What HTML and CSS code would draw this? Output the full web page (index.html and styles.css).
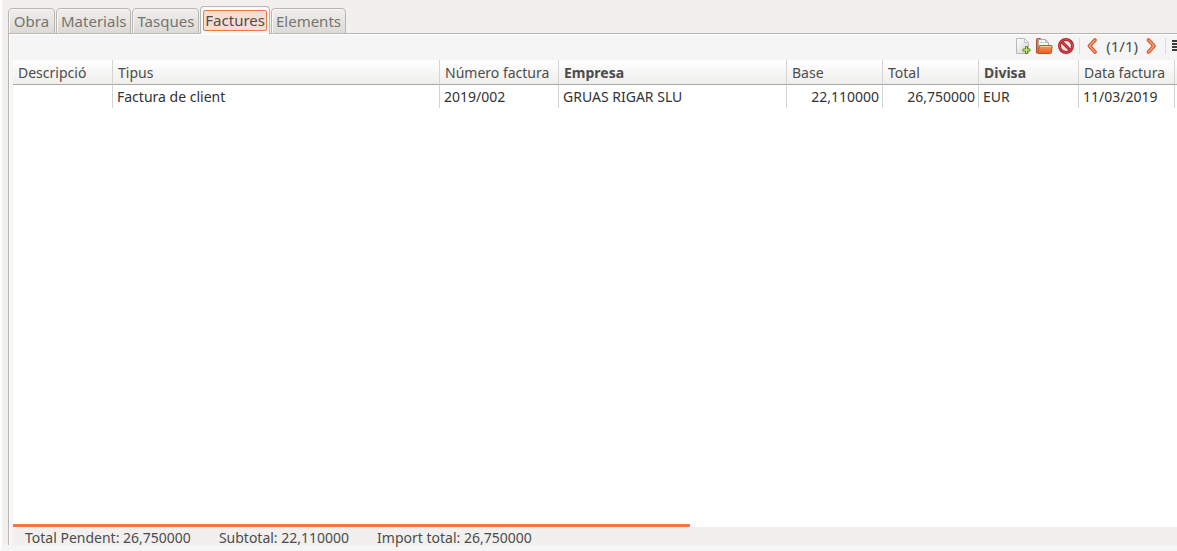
FILE: index.html
```html
<!DOCTYPE html>
<html lang="ca">
<head>
<meta charset="utf-8">
<meta name="viewport" content="width=device-width, initial-scale=1">
<title>Factures</title>
<link rel="stylesheet" href="styles.css">
</head>
<body>
<main class="window">
  <div class="tabs" role="tablist">
    <button class="tab" role="tab" type="button">Obra</button>
    <button class="tab" role="tab" type="button">Materials</button>
    <button class="tab" role="tab" type="button">Tasques</button>
    <button class="tab tab-active" role="tab" type="button" aria-selected="true"><span class="tab-focus">Factures</span></button>
    <button class="tab" role="tab" type="button">Elements</button>
  </div>
  <section class="panel" role="tabpanel">
    <div class="toolbar">
      <button class="tool" type="button" aria-label="Nou">
        <svg width="16" height="16" viewBox="0 0 16 16"><defs><linearGradient id="page" x2="1" y2="1"><stop stop-color="#fff"/><stop offset="1" stop-color="#d2d2d2"/></linearGradient></defs><path d="M1.500.5h8l4 4v11h-12z" fill="url(#page)" stroke="#b8b8b8"/><path d="M9.500.5v4h4z" fill="#fff" stroke="#c4c4c4"/><path d="M10.500 8.500h2v2.500h2.500v2h-2.500v2.500h-2V13H8v-2h2.500z" fill="#8fc93a" stroke="#4e8a0c"/><path d="M11.500 9v6M8.500 12h6" stroke="#c8ec80"/></svg>
      </button>
      <button class="tool" type="button" aria-label="Obre">
        <svg width="17" height="16" viewBox="0 0 17 16"><defs><linearGradient id="folder" x2="0" y2="1"><stop stop-color="#fa9d62"/><stop offset="1" stop-color="#e85a20"/></linearGradient></defs><path d="M.5 15V1.500q0-1 1-1h3l1 1v13.500z" fill="#d9774c" stroke="#b4532b"/><path d="M2.500 13V1.500h7l3 3V13z" fill="#f7f7f7" stroke="#aaa"/><path d="M9.500 1.500v3h3" fill="none" stroke="#b5b5b5"/><path d="M4 4.500h4" stroke="#c9c9c9"/><path d="M3.500 7.500h12q.6 0 .6.700l-.6 6.300q-.1 1-1 1H2.500q-.8 0-.6-1z" fill="url(#folder)" stroke="#c75322"/><path d="M4.200 8.500h10.800" stroke="#fdc8a0"/></svg>
      </button>
      <button class="tool" type="button" aria-label="Elimina">
        <svg width="16" height="16" viewBox="0 0 16 16"><circle cx="8" cy="8" r="6.500" fill="#f3e3e3" stroke="#b3222a" stroke-width="3"/><path d="M4 4l8 8" stroke="#b3222a" stroke-width="3"/><circle cx="8" cy="8" r="6.500" fill="none" stroke="#d6555a"/><path d="M3.500 3.500l9 9" stroke="#d6555a"/></svg>
      </button>
      <span class="divider"></span>
      <button class="tool" type="button" aria-label="Anterior">
        <svg width="12" height="16" viewBox="0 0 12 16"><path d="M9 2L3.500 8 9 14" fill="none" stroke="#d04f22" stroke-width="3.600" stroke-linecap="round" stroke-linejoin="round"/><path d="M9 2L3.500 8 9 14" fill="none" stroke="#f8a477" stroke-width="1.600" stroke-linecap="round"/></svg>
      </button>
      <span class="count">(1/1)</span>
      <button class="tool" type="button" aria-label="Següent">
        <svg width="12" height="16" viewBox="0 0 12 16"><path d="M2.500 2L8 8l-5.500 6" fill="none" stroke="#d04f22" stroke-width="3.600" stroke-linecap="round" stroke-linejoin="round"/><path d="M2.500 2L8 8l-5.500 6" fill="none" stroke="#f8a477" stroke-width="1.600" stroke-linecap="round"/></svg>
      </button>
      <span class="divider divider-menu"></span>
      <button class="tool" type="button" aria-label="Menú">
        <svg width="5" height="12" viewBox="0 0 5 12"><path d="M0 1h5M0 4h5M0 7h5M0 10h5" stroke="#3c3b37" stroke-width="2"/></svg>
      </button>
    </div>
    <div class="list">
      <table class="grid">
        <colgroup><col class="w-desc"><col><col class="w-num"><col class="w-company"><col class="w-amount"><col class="w-amount"><col class="w-desc"><col class="w-amount"><col class="w-rest"></colgroup>
        <thead><tr><th>Descripció</th><th>Tipus</th><th>Número factura</th><th class="strong">Empresa</th><th>Base</th><th>Total</th><th class="strong">Divisa</th><th>Data factura</th><th></th></tr></thead>
        <tbody><tr><td></td><td>Factura de client</td><td>2019/002</td><td>GRUAS RIGAR SLU</td><td class="amount">22,110000</td><td class="amount">26,750000</td><td>EUR</td><td>11/03/2019</td><td></td></tr></tbody>
      </table>
    </div>
    <div class="scroll"><div class="scroll-thumb"></div></div>
    <footer class="totals"><span>Total Pendent: 26,750000</span><span>Subtotal: 22,110000</span><span>Import total: 26,750000</span></footer>
  </section>
</main>
</body>
</html>
```
FILE: styles.css
```css
* { box-sizing: border-box; }
body {
  margin: 0;
  background: #f5f5f5;
  color: #4c4c4c;
  font: 14px/18px "Noto Sans", sans-serif;
}
button {
  margin: 0;
  padding: 0;
  border: 0;
  background: none;
  color: inherit;
  font: inherit;
}
.window {
  display: flex;
  flex-direction: column;
  min-height: 100vh;
  padding: 6px 0 0 6px;
  border-left: 2px solid #fff;
  border-bottom: 6px solid #f5f5f5;
  background: #f1f0ee;
}
.tabs {
  display: flex;
  align-items: flex-end;
  gap: 1px;
  height: 28px;
  box-shadow: inset 0 -1px #b7b3ae;
}
.tab {
  min-width: 47px;
  height: 26px;
  padding: 0 4px;
  border: 1px solid #bab7b3;
  border-radius: 4px 4px 0 0;
  background: linear-gradient(#f0efed, #dcdad7);
  box-shadow: inset 1px 1px #f8f7f6;
  color: #77746f;
  font-size: 15px;
  white-space: nowrap;
}
.tab-active {
  height: 28px;
  padding: 0 2px;
  border-bottom: 0;
  background: linear-gradient(#fff, #f8f8f8);
  color: #4c4c4c;
}
.tab-focus {
  display: block;
  padding: 0 1px 1px;
  border: 1px solid #f07746;
  border-radius: 2px;
  background: #f8ddd2;
}
.panel {
  flex: 1;
  display: flex;
  flex-direction: column;
  padding-left: 4px;
  border-left: 1px solid #b7b3ae;
  background: #f5f5f5;
  box-shadow: inset 1px 1px #fff;
}
.toolbar {
  display: flex;
  justify-content: flex-end;
  align-items: center;
  height: 26px;
  padding-bottom: 2px;
  gap: 5px;
}
.tool, .tool svg { display: block; }
.divider {
  width: 1px;
  height: 16px;
  background: #dddcda;
}
.divider + .tool { margin-left: 1px; }
.count {
  padding: 0 3px;
  font-size: 15px;
}
.divider-menu { margin-left: 2px; }
.list {
  flex: 1;
  background: #fff;
}
.grid {
  width: 100%;
  border-collapse: separate;
  border-spacing: 0;
  table-layout: fixed;
}
.w-desc { width: 100px; }
.w-num { width: 119px; }
.w-company { width: 228px; }
.w-amount { width: 96px; }
.w-rest { width: 2px; }
.grid th, .grid td {
  height: 23px;
  padding: 0 3px 0 4px;
  border-right: 1px solid #d5d4d2;
  text-align: left;
  white-space: nowrap;
}
.grid th {
  height: 25px;
  padding: 1px 0 0 5px;
  border-bottom: 1px solid #a9a8a2;
  background: linear-gradient(#fff, #efeeec);
  font-weight: 400;
}
.grid .strong { font-weight: 700; }
.grid td { color: #333; }
.grid .amount { padding: 0 3px; text-align: right; }
.grid th:last-child, .grid td:last-child { padding: 0; border-right: 0; }
.scroll { background: #fff; }
.scroll-thumb {
  width: 58.16%;
  height: 3px;
  background: #f07746;
}
.totals {
  display: flex;
  gap: 28px;
  padding: 4px 12px 0;
  background: #f1f0ee;
  line-height: 14px;
}
```
